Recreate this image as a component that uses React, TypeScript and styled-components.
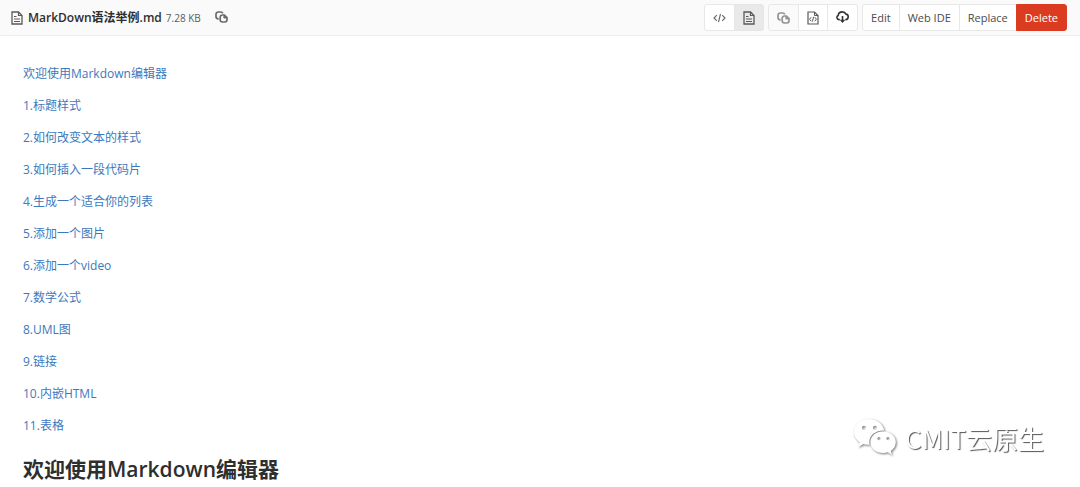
import React from "react";
import styled, { createGlobalStyle, css } from "styled-components";

const GlobalStyle = createGlobalStyle`
  *, *::before, *::after { box-sizing: border-box; }
  body {
    margin: 0;
    background: #fff;
    color: #2e2e2e;
    font-family: "Open Sans", "Noto Sans CJK SC", sans-serif;
    font-size: 12px;
    line-height: 20px;
  }
`;

const Header = styled.header`
  display: flex;
  align-items: center;
  justify-content: space-between;
  height: 36px;
  padding: 0 13px 0 11px;
  background: #fafafa;
  border-bottom: 1px solid #ececec;
`;

const FileInfo = styled.div`
  display: flex;
  align-items: center;
  white-space: nowrap;
`;

const FileName = styled.strong`
  margin-left: 5px;
  font-size: 12px;
  font-weight: 600;
`;

const FileSize = styled.small`
  margin-left: 4px;
  font-size: 10px;
  color: #5c5c5c;
`;

const PlainButton = styled.button`
  display: flex;
  margin: 0 0 2px 14px;
  padding: 0;
  border: 0;
  background: none;
  color: #6b6b6b;
`;

const Actions = styled.div`
  display: flex;
  gap: 4px;
`;

const Group = styled.div`
  display: flex;
`;

type ButtonProps = { $tone?: "active" | "muted" | "danger" };

const Button = styled.button<ButtonProps>`
  display: flex;
  align-items: center;
  justify-content: center;
  height: 27px;
  padding: 0 8px;
  border: 1px solid #e8e8e8;
  background: #fff;
  color: #4a4a4a;
  font: inherit;
  font-size: 11px;
  white-space: nowrap;

  & + & { margin-left: -1px; }
  &:first-child { border-radius: 3px 0 0 3px; }
  &:last-child { border-radius: 0 3px 3px 0; }

  ${(p) => p.$tone === "active" && css`background: #e9e9e9; border-color: #e6e6e6;`}
  ${(p) => p.$tone === "muted" && css`background: #fafafa; color: #939393;`}
  ${(p) => p.$tone === "danger" && css`background: #db3b21; border-color: #db3b21; color: #fff;`}
`;

const Content = styled.main`
  padding: 28px 23px 0;
`;

const Contents = styled.ul`
  display: flex;
  flex-direction: column;
  gap: 12px;
  margin: 0;
  padding: 0;
  list-style: none;
`;

const ContentsLink = styled.a`
  color: #3d78bc;
  text-decoration: none;
`;

const Heading = styled.h1`
  margin: 17px 0 0;
  font-size: 21px;
  font-weight: 600;
  line-height: 32px;
`;

const Watermark = styled.div`
  position: fixed;
  right: 36px;
  bottom: 29px;
  display: flex;
  align-items: center;
  gap: 8px;
  color: #fff;
  font-family: "Noto Sans CJK SC", sans-serif;
  font-size: 26px;
  line-height: 40px;
  text-shadow: 1px 1px 1px #555;
  pointer-events: none;
`;

const BubbleSvg = styled.svg`
  filter: drop-shadow(1px 1px 1px #777);
`;

const DocIcon = () => (
  <svg width="12" height="14" viewBox="0 0 12 14" fill="none" stroke="#5a5a5a" aria-hidden="true">
    <path d="M1 1h6.5L11 4.5V13H1z" strokeWidth="1.3" />
    <path d="M7.5 1v3.5H11M3 5.500h2.500M3 8h6M3 10.500h6" strokeWidth="1.2" />
  </svg>
);

const DocCodeIcon = () => (
  <svg width="12" height="14" viewBox="0 0 12 14" fill="none" stroke="#5a5a5a" aria-hidden="true">
    <path d="M1 1h6.5L11 4.5V13H1z" strokeWidth="1.2" />
    <path d="M7.5 1v3.5H11M4.200 6.200L2.600 8.200l1.600 2M7.800 6.200l1.600 2-1.600 2M6.600 5.800l-1.200 4.800" />
  </svg>
);

const CopyIcon = () => (
  <svg width="13" height="12" viewBox="0 0 13 12" fill="none" stroke="currentColor" strokeWidth="1.7" aria-hidden="true">
    <path d="M3.700 7.900H3.300A2.300 2.300 0 0 1 1 5.600V3.300A2.300 2.300 0 0 1 3.300 1h2.400A2.200 2.200 0 0 1 7.800 2.300" />
    <path d="M7.400 4h2l2.600 2.600v2.200a2.200 2.200 0 0 1-2.200 2.200H7.400a2.200 2.200 0 0 1-2.200-2.200V6.200A2.200 2.200 0 0 1 7.400 4z" />
    <path d="M8.800 4.300v2.800h2.900z" fill="currentColor" strokeWidth=".8" />
  </svg>
);

const CodeIcon = () => (
  <svg width="13" height="10" viewBox="0 0 13 10" fill="none" stroke="#666" strokeWidth="1.1" aria-hidden="true">
    <path d="M3.800 2.200L1 5l2.800 2.800M9.200 2.200L12 5 9.200 7.800M7.500 1l-2 8" />
  </svg>
);

const DownloadIcon = () => (
  <svg width="13" height="13" viewBox="0 0 13 13" fill="none" stroke="#333" strokeWidth="1.6" aria-hidden="true">
    <path d="M3.8 8.6H3a2.2 2.2 0 0 1-.8-4.2C2.5 2.2 4.3.9 6.3.9c1.7 0 3 .8 3.6 2.2 1.4.1 2.3 1.2 2.3 2.6 0 1.6-1.1 2.9-2.6 2.9h-.3" />
    <path d="M6.5 5v6" />
    <path d="M3.8 8.8h5.4L6.5 12z" fill="#333" stroke="none" />
  </svg>
);

const Bubbles = () => (
  <BubbleSvg width="44" height="40" viewBox="0 0 44 40" aria-hidden="true">
    <path
      fillRule="evenodd"
      fill="#fff"
      d="M16 1C7.500 1 1 6.600 1 14c0 4.300 2.200 7.800 5.800 10.200L5 29l5.600-2.900c1.900.6 3.700.8 6 .8A11.500 11.500 0 0 1 16.300 24c0-6.700 6-11.600 13.900-11.600h1C30 5.700 23.500 1 16 1zM11 7.800a2 2 0 1 1 0 4 2 2 0 0 1 0-4zm11 0a2 2 0 1 1 0 4 2 2 0 0 1 0-4z"
    />
    <path
      fillRule="evenodd"
      fill="#fff"
      d="M30.200 13.500c-7.200 0-12.700 4.700-12.700 10.700s5.500 10.800 12.700 10.800c1.700 0 3.200-.3 4.600-.7L39 37l-1.200-4c3-2 5-5.200 5-8.800 0-6-5.500-10.700-12.600-10.700zM26 19a1.600 1.600 0 1 1 0 3.200 1.600 1.600 0 0 1 0-3.200zm9 0a1.600 1.600 0 1 1 0 3.200 1.600 1.600 0 0 1 0-3.200z"
    />
  </BubbleSvg>
);

const sections = [
  "欢迎使用Markdown编辑器",
  "1.标题样式",
  "2.如何改变文本的样式",
  "3.如何插入一段代码片",
  "4.生成一个适合你的列表",
  "5.添加一个图片",
  "6.添加一个video",
  "7.数学公式",
  "8.UML图",
  "9.链接",
  "10.内嵌HTML",
  "11.表格",
];

export default function App() {
  return (
    <>
      <GlobalStyle />
      <Header>
        <FileInfo>
          <DocIcon />
          <FileName>MarkDown语法举例.md</FileName>
          <FileSize>7.28 KB</FileSize>
          <PlainButton aria-label="Copy file path"><CopyIcon /></PlainButton>
        </FileInfo>
        <Actions>
          <Group>
            <Button aria-label="Display source"><CodeIcon /></Button>
            <Button $tone="active" aria-label="Display rendered file"><DocIcon /></Button>
          </Group>
          <Group>
            <Button $tone="muted" aria-label="Copy source"><CopyIcon /></Button>
            <Button aria-label="Open raw"><DocCodeIcon /></Button>
            <Button aria-label="Download"><DownloadIcon /></Button>
          </Group>
          <Group>
            <Button>Edit</Button>
            <Button>Web IDE</Button>
            <Button>Replace</Button>
            <Button $tone="danger">Delete</Button>
          </Group>
        </Actions>
      </Header>
      <Content>
        <Contents>
          {sections.map((title, index) => (
            <li key={title}>
              <ContentsLink href={`#section-${index}`}>{title}</ContentsLink>
            </li>
          ))}
        </Contents>
        <Heading id="section-0">欢迎使用Markdown编辑器</Heading>
      </Content>
      <Watermark>
        <Bubbles />
        <span>CMIT云原生</span>
      </Watermark>
    </>
  );
}
